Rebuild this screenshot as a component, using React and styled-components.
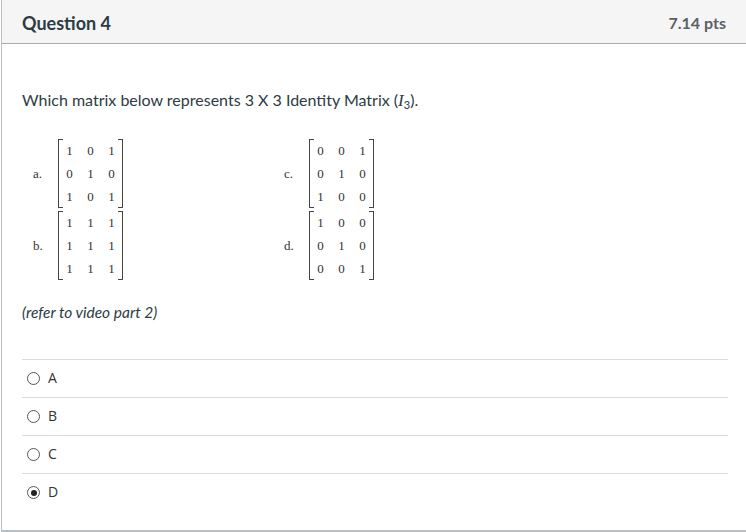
import React from 'react';
import styled, { createGlobalStyle } from 'styled-components';

const Global = createGlobalStyle`
  body {
    margin: 0;
    background: #fff;
    font-family: Lato, 'Open Sans', sans-serif;
  }
`;

const matrices = [
  { label: 'a.', rows: [[1, 0, 1], [0, 1, 0], [1, 0, 1]] },
  { label: 'c.', rows: [[0, 0, 1], [0, 1, 0], [1, 0, 0]] },
  { label: 'b.', rows: [[1, 1, 1], [1, 1, 1], [1, 1, 1]] },
  { label: 'd.', rows: [[1, 0, 0], [0, 1, 0], [0, 0, 1]] },
];

const answers = ['A', 'B', 'C', 'D'];

function Matrix({ label, rows }) {
  return (
    <MatrixItem>
      <MatrixLabel>{label}</MatrixLabel>
      <Bracket>
        {rows.flat().map((v, i) => (
          <Cell key={i}>{v}</Cell>
        ))}
      </Bracket>
    </MatrixItem>
  );
}

function App() {
  return (
    <>
      <Global />
      <Card>
        <Header>
          <Title>Question 4</Title>
          <Points>7.14 pts</Points>
        </Header>
        <Body>
          <QuestionText>
            Which matrix below represents 3 X 3 Identity Matrix (<MathI>I</MathI><Sub>3</Sub>).
          </QuestionText>
          <MatrixGrid>
            {matrices.map((m) => (
              <Matrix key={m.label} label={m.label} rows={m.rows} />
            ))}
          </MatrixGrid>
          <Note>(refer to video part 2)</Note>
          <AnswerList>
            {answers.map((a) => (
              <Answer key={a}>
                <Radio checked={a === 'D'} />
                <AnswerLabel>{a}</AnswerLabel>
              </Answer>
            ))}
          </AnswerList>
        </Body>
      </Card>
    </>
  );
}

const Card = styled.div`
  margin-left: 1px;
  border-left: 1px solid #b9bec2;
  border-bottom: 2px solid #b9bec2;
  height: 532px;
  box-sizing: border-box;
`;

const Header = styled.div`
  height: 44px;
  background: #f5f5f5;
  border-bottom: 1px solid #a9adb0;
  display: flex;
  align-items: center;
  justify-content: space-between;
  padding: 2px 20px 0 20px;
  box-sizing: border-box;
`;

const Title = styled.h2`
  margin: 0;
  font-size: 18px;
  font-weight: 700;
  color: #2d3b45;
`;

const Points = styled.span`
  font-size: 16px;
  font-weight: 700;
  color: #5b6066;
`;

const Body = styled.div`
  padding: 46px 18px 0 20px;
`;

const QuestionText = styled.p`
  margin: 0;
  font-size: 16px;
  line-height: 20px;
  color: #2d3b45;
`;

const MathI = styled.span`
  font-family: 'Liberation Serif', serif;
  font-style: italic;
  font-size: 17px;
`;

const Sub = styled.sub`
  font-size: 11px;
  vertical-align: -3px;
`;

const MatrixGrid = styled.div`
  display: grid;
  grid-template-columns: 251px auto;
  row-gap: 3px;
  margin: 24px 0 0 11px;
`;

const MatrixItem = styled.div`
  display: flex;
  align-items: center;
  font-family: 'Liberation Serif', serif;
  font-size: 13px;
  color: #333;
`;

const MatrixLabel = styled.span`
  width: 25px;
`;

const Bracket = styled.div`
  position: relative;
  display: grid;
  grid-template-columns: repeat(3, 21px);
  grid-auto-rows: 23px;
  width: 63px;
  border-left: 1px solid #444;
  border-right: 1px solid #444;

  &::before,
  &::after {
    content: '';
    position: absolute;
    top: 0;
    bottom: 0;
    width: 4px;
    border-top: 1px solid #444;
    border-bottom: 1px solid #444;
  }
  &::before { left: 0; }
  &::after { right: 0; }
`;

const Cell = styled.span`
  display: flex;
  align-items: center;
  justify-content: center;
`;

const Note = styled.p`
  margin: 23px 0 0;
  font-size: 15.5px;
  font-style: italic;
  color: #2d3b45;
`;

const AnswerList = styled.div`
  margin-top: 38px;
`;

const Answer = styled.div`
  display: flex;
  align-items: center;
  height: 37px;
  border-top: 1px solid #dcdcdc;
  padding-left: 5px;
`;

const Radio = styled.span`
  position: relative;
  width: 11px;
  height: 11px;
  border: 1px solid #555;
  border-radius: 50%;
  margin-right: 8px;
  background: #fff;

  &::after {
    content: '';
    display: ${(p) => (p.checked ? 'block' : 'none')};
    position: absolute;
    top: 2.5px;
    left: 2.5px;
    width: 6px;
    height: 6px;
    border-radius: 50%;
    background: #222;
  }
`;

const AnswerLabel = styled.span`
  font-family: 'Open Sans', sans-serif;
  font-size: 14px;
  color: #333;
  position: relative;
  top: -1px;
`;

export default App;
